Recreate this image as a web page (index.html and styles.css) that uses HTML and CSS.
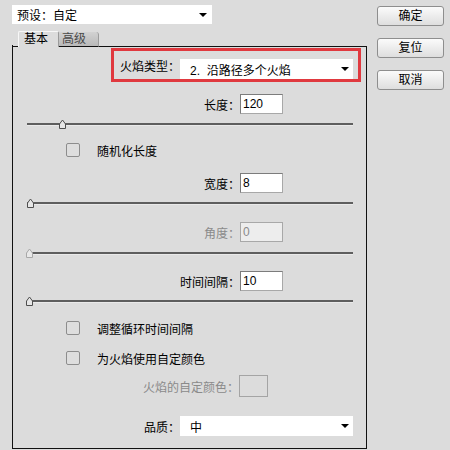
FILE: index.html
```html
<!DOCTYPE html>
<html lang="zh-CN">

<head>
  <meta charset="UTF-8">
  <meta name="viewport" content="width=device-width, initial-scale=1.0">
  <title>火焰</title>
  <link rel="stylesheet" href="styles.css">
</head>

<body>
  <div class="dialog">
    <div class="main">
      <div class="select preset">预设：自定</div>
      <div class="tab-header">
        <span class="tab-edge"></span>
        <span class="tab-item active">基本</span>
        <span class="tab-item">高级</span>
        <span class="tab-fill"></span>
      </div>
      <div class="panel">
        <div class="highlight">
          <span class="type-label">火焰类型：</span>
          <div class="select type-select">2.&nbsp;&nbsp;沿路径多个火焰</div>
        </div>

        <div class="row mt-12">
          <span class="label">长度：</span>
          <div class="input">120</div>
        </div>
        <div class="slider mt-3">
          <span class="track"></span>
          <svg class="thumb" style="margin-left:31px" width="9" height="12" viewBox="0 0 9 12"><path d="M1.5 10.5V6L4.5 2L7.5 6V10.5Z" /></svg>
        </div>

        <label class="check mt-12"><span class="box"></span>随机化长度</label>

        <div class="row mt-16">
          <span class="label">宽度：</span>
          <div class="input">8</div>
        </div>
        <div class="slider mt-3">
          <span class="track"></span>
          <svg class="thumb" style="margin-left:-1px" width="9" height="12" viewBox="0 0 9 12"><path d="M1.5 10.5V6L4.5 2L7.5 6V10.5Z" /></svg>
        </div>

        <div class="row mt-12 disabled">
          <span class="label">角度：</span>
          <div class="input">0</div>
        </div>
        <div class="slider mt-4 disabled">
          <span class="track"></span>
          <svg class="thumb" style="margin-left:-2px" width="9" height="12" viewBox="0 0 9 12"><path d="M1.5 10.5V6L4.5 2L7.5 6V10.5Z" /></svg>
        </div>

        <div class="row mt-11">
          <span class="label">时间间隔：</span>
          <div class="input">10</div>
        </div>
        <div class="slider mt-3">
          <span class="track"></span>
          <svg class="thumb" style="margin-left:-2px" width="9" height="12" viewBox="0 0 9 12"><path d="M1.5 10.5V6L4.5 2L7.5 6V10.5Z" /></svg>
        </div>

        <label class="check mt-13"><span class="box"></span>调整循环时间间隔</label>
        <label class="check mt-16"><span class="box"></span>为火焰使用自定颜色</label>

        <div class="row color-row mt-10 disabled">
          <span class="label">火焰的自定颜色：</span>
          <span class="swatch"></span>
        </div>

        <div class="row quality-row">
          <span class="label">品质：</span>
          <div class="select quality-select">中</div>
        </div>
      </div>
    </div>

    <div class="side">
      <button class="btn">确定</button>
      <button class="btn">复位</button>
      <button class="btn">取消</button>
    </div>
  </div>
</body>

</html>
```

FILE: styles.css
```css
* {
  box-sizing: border-box;
}

body {
  margin: 0;
  background: #dcdcdc;
  font-family: "Liberation Sans", "Noto Sans CJK SC", sans-serif;
  font-size: 12px;
  color: #000;
}

.dialog {
  display: flex;
  align-items: flex-start;
}

.main {
  width: 355px;
  margin: 5px 0 0 12px;
}

.side {
  display: flex;
  flex-direction: column;
  gap: 12px;
  margin: 6px 0 0 10px;
}

.btn {
  width: 67px;
  height: 20px;
  padding: 0;
  border: 1px solid #8e8e8e;
  border-radius: 3px;
  background: linear-gradient(#fbfbfb, #dedede);
  font-family: inherit;
  font-size: 12px;
  line-height: 17px;
  color: #000;
}

/* dropdowns */
.select {
  display: flex;
  align-items: center;
  justify-content: space-between;
  height: 20px;
  background: #fff;
  padding: 0 4px 0 10px;
  white-space: nowrap;
}

.select::after {
  content: "";
  border-left: 4px solid transparent;
  border-right: 4px solid transparent;
  border-top: 4px solid #000;
}

.preset {
  width: 200px;
  height: 19px;
  padding: 0 5px 0 5px;
}

/* tabs */
.tab-header {
  display: flex;
  align-items: flex-end;
  height: 16px;
  margin-top: 7px;
}

.tab-edge {
  width: 6px;
  height: 2px;
  border-left: 1px solid #111;
  border-bottom: 1px solid #111;
}

.tab-item {
  height: 15px;
  line-height: 14px;
  padding: 0 4px;
  border-bottom: 1px solid #111;
}

.tab-item.active {
  width: 41px;
  height: 16px;
  padding-left: 5px;
  border: 1px solid #f7f7f7;
  border-right-color: #9a9a9a;
  border-bottom: none;
  border-radius: 2px 2px 0 0;
}

.tab-item:not(.active) {
  width: 40px;
  height: 15px;
  padding-left: 3px;
  color: #4a4a4a;
  background: linear-gradient(#d2d2d2, #b9b9b9);
  border-right: 1px solid #9c9c9c;
  border-radius: 0 3px 0 0;
}

.tab-fill {
  flex: 1;
  border-bottom: 1px solid #111;
}

.panel {
  border: 1px solid #111;
  border-top: none;
  padding: 1px 0 12px;
}

/* highlighted type picker */
.highlight {
  display: flex;
  align-items: flex-end;
  height: 34px;
  margin: 0 5px 0 98px;
  padding: 0 5px 0 6px;
  border: 3px solid #e0393f;
}

.type-label {
  width: 60px;
  align-self: center;
  white-space: nowrap;
}

.type-select {
  flex: 1;
}

/* label + field rows */
.row {
  display: flex;
  align-items: center;
  height: 20px;
}

.row .label {
  width: 227px;
  text-align: right;
  white-space: nowrap;
}

.input {
  width: 43px;
  height: 20px;
  padding-left: 2px;
  line-height: 18px;
  background: #fff;
  border: 1px solid #7c7c7c;
  border-right-color: #a8a8a8;
  border-bottom-color: #a8a8a8;
}

.row.disabled .label {
  color: #8a8a8a;
}

.row.disabled .input {
  background: #ededed;
  color: #8a8a8a;
  border-color: #a8a8a8;
}

.color-row {
  height: 22px;
}

.color-row .label {
  width: 226px;
}

.swatch {
  width: 29px;
  height: 22px;
  border: 1px solid #a4a4a4;
}

.quality-row {
  margin-top: 19px;
}

.quality-row .label {
  width: 167px;
}

.quality-select {
  width: 173px;
}

/* sliders */
.slider {
  display: grid;
  align-items: center;
  height: 14px;
  margin-left: 14px;
  margin-right: 13px;
}

.slider .track,
.slider .thumb {
  grid-area: 1 / 1;
}

.slider .track {
  height: 3px;
  border-top: 2px solid #5e5e5e;
  border-bottom: 1px solid #eaeaea;
}

.slider .thumb {
  justify-self: start;
}

.slider .thumb path {
  fill: #e6e6e6;
  stroke: #4e4e4e;
}

.slider.disabled .thumb path {
  fill: #e8e8e8;
  stroke: #a8a8a8;
}

/* checkboxes */
.check {
  display: flex;
  align-items: center;
  gap: 17px;
  height: 14px;
  padding-left: 53px;
}

.box {
  width: 14px;
  height: 14px;
  border: 1px solid #8d8d8d;
  border-radius: 2px;
  background: #dedede;
}

.mt-3 { margin-top: 3px; }
.mt-4 { margin-top: 4px; }
.mt-10 { margin-top: 10px; }
.mt-11 { margin-top: 11px; }
.mt-12 { margin-top: 12px; }
.mt-13 { margin-top: 13px; }
.mt-16 { margin-top: 16px; }
```
